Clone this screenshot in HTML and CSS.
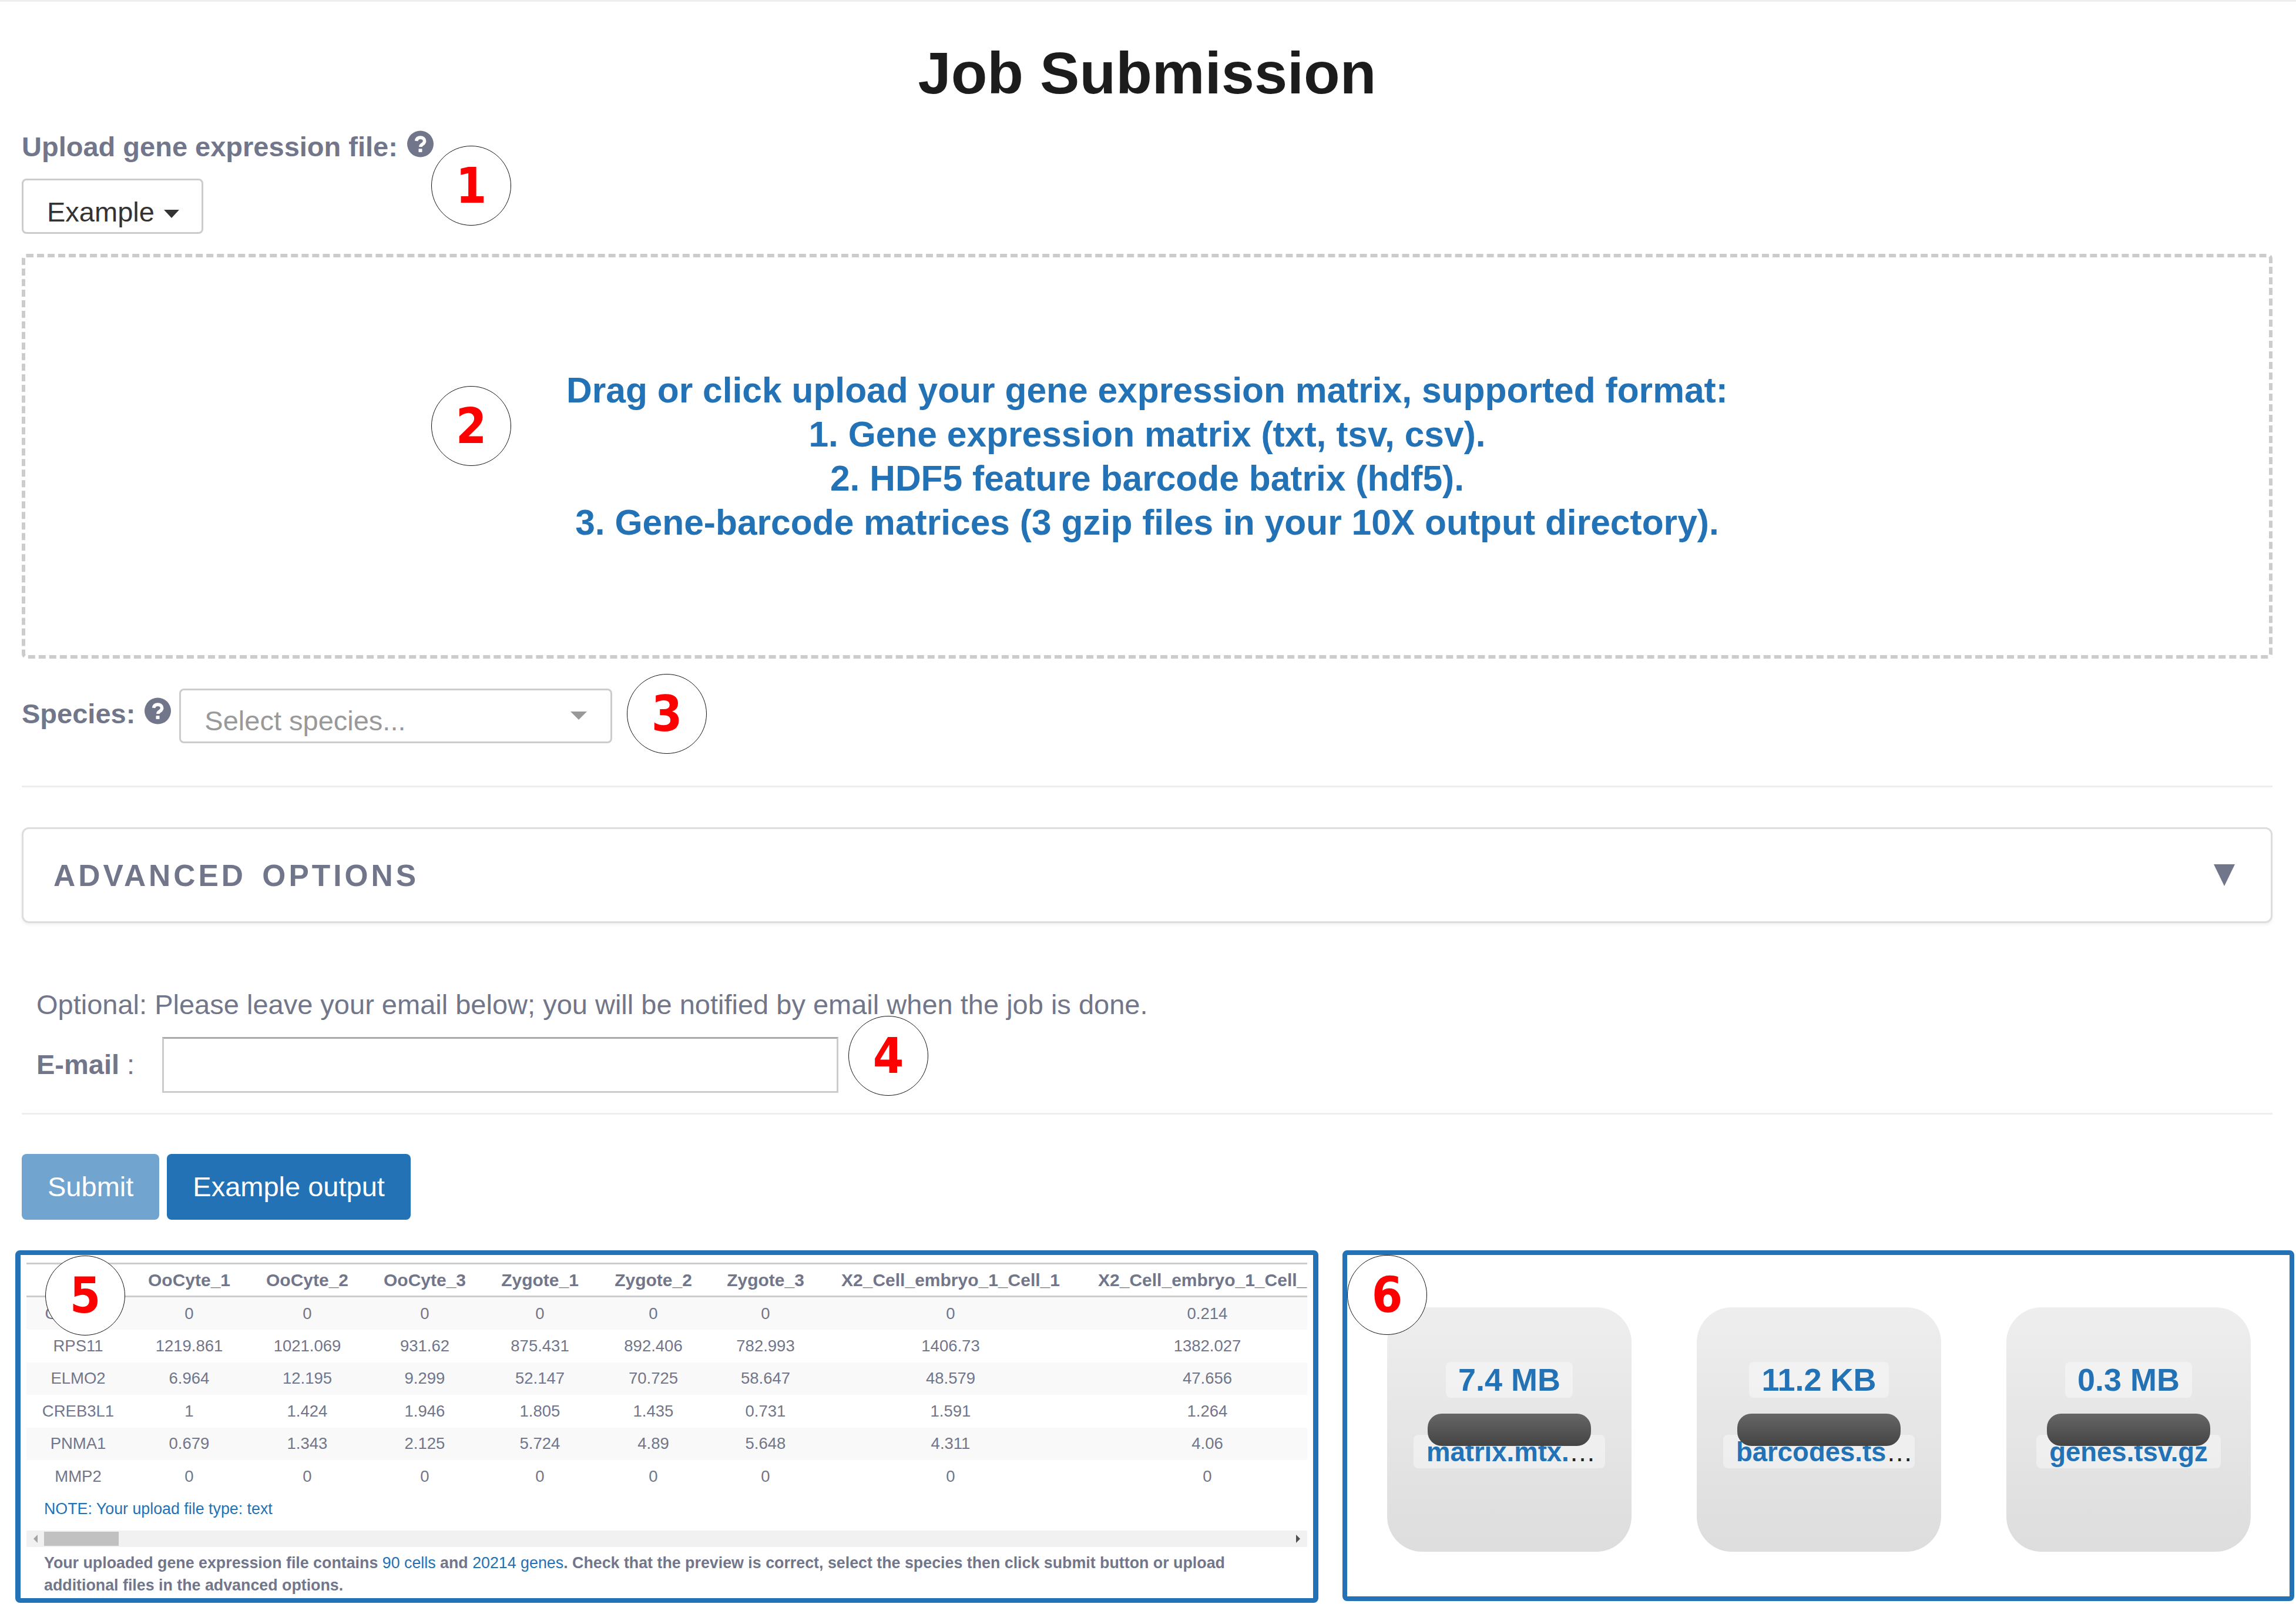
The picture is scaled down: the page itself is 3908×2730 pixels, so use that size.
FILE: index.html
```html
<!DOCTYPE html>
<html>
<head>
	<meta charset="utf-8">
	<title>Job Submission</title>
	<link rel="stylesheet" href="styles.css">
</head>
<body>
	<svg class="defs" width="0" height="0">
		<symbol id="help" viewBox="0 0 24 24">
			<circle cx="12" cy="12" r="12" fill="currentColor"/>
			<path d="M8.300 9.300c.3-2 1.800-3.100 3.800-3.100 2.100 0 3.700 1.300 3.700 3.100 0 1.500-.9 2.300-1.900 3-.9.6-1.700 1.100-1.700 2.300" fill="none" stroke="#fff" stroke-width="3"/>
			<rect x="10.400" y="16.400" width="3.200" height="3" fill="#fff"/>
		</symbol>
	</svg>

	<div class="form">
		<h1 class="title">Job Submission</h1>
		<div class="upload-label">Upload gene expression file: <svg class="help help-upload"><use href="#help"/></svg></div>
		<div class="example-btn">Example<span class="caret"></span></div>

		<div class="dropzone">
			<div class="dz-msg">
				Drag or click upload your gene expression matrix, supported format:<br>
				1. Gene expression matrix (txt, tsv, csv).<br>
				2. HDF5 feature barcode batrix (hdf5).<br>
				3. Gene-barcode matrices (3 gzip files in your 10X output directory).
			</div>
		</div>

		<div class="species-row">
			<div class="species-label">Species:</div>
			<svg class="help help-species"><use href="#help"/></svg>
			<div class="select">
				<span>Select species...</span>
				<span class="select-caret"></span>
			</div>
		</div>
		<div class="rule rule-species"></div>

		<div class="advanced">
			<span class="advanced-title">ADVANCED OPTIONS</span>
			<span class="advanced-arrow"></span>
		</div>

		<div class="email-block">
			<div class="email-note">Optional: Please leave your email below; you will be notified by email when the job is done.</div>
			<div class="email-row">
				<div class="email-label"><b>E-mail</b> :</div>
				<div class="email-input"></div>
			</div>
		</div>
		<div class="rule rule-email"></div>

		<div class="actions">
			<div class="btn btn-disabled">Submit</div>
			<div class="btn">Example output</div>
		</div>
	</div>

	<div class="results">
		<div class="box box-preview">
			<div class="table-wrap">
				<table class="preview">
					<thead>
						<tr><th></th><th>OoCyte_1</th><th>OoCyte_2</th><th>OoCyte_3</th><th>Zygote_1</th><th>Zygote_2</th><th>Zygote_3</th><th>X2_Cell_embryo_1_Cell_1</th><th>X2_Cell_embryo_1_Cell_2</th></tr>
					</thead>
					<tbody>
						<tr><td>C9orf152</td><td>0</td><td>0</td><td>0</td><td>0</td><td>0</td><td>0</td><td>0</td><td>0.214</td></tr>
						<tr><td>RPS11</td><td>1219.861</td><td>1021.069</td><td>931.62</td><td>875.431</td><td>892.406</td><td>782.993</td><td>1406.73</td><td>1382.027</td></tr>
						<tr><td>ELMO2</td><td>6.964</td><td>12.195</td><td>9.299</td><td>52.147</td><td>70.725</td><td>58.647</td><td>48.579</td><td>47.656</td></tr>
						<tr><td>CREB3L1</td><td>1</td><td>1.424</td><td>1.946</td><td>1.805</td><td>1.435</td><td>0.731</td><td>1.591</td><td>1.264</td></tr>
						<tr><td>PNMA1</td><td>0.679</td><td>1.343</td><td>2.125</td><td>5.724</td><td>4.89</td><td>5.648</td><td>4.311</td><td>4.06</td></tr>
						<tr><td>MMP2</td><td>0</td><td>0</td><td>0</td><td>0</td><td>0</td><td>0</td><td>0</td><td>0</td></tr>
					</tbody>
				</table>
				<div class="note">NOTE: Your upload file type: text</div>
				<div class="scrollbar">
					<span class="arrow-left"></span>
					<span class="thumb"></span>
					<span class="arrow-right"></span>
				</div>
			</div>
			<p class="summary">Your uploaded gene expression file contains <span class="count">90 cells</span> and <span class="count">20214 genes</span>. Check that the preview is correct, select the species then click submit button or upload additional files in the advanced options.</p>
		</div>

		<div class="box box-files">
			<div class="tile">
				<div class="size">7.4 MB</div>
				<div class="name">matrix.mtx.<span class="dots">…</span></div>
				<div class="pill"></div>
			</div>
			<div class="tile">
				<div class="size">11.2 KB</div>
				<div class="name">barcodes.ts<span class="dots">…</span></div>
				<div class="pill"></div>
			</div>
			<div class="tile">
				<div class="size">0.3 MB</div>
				<div class="name">genes.tsv.gz</div>
				<div class="pill"></div>
			</div>
		</div>
	</div>

	<div class="badge badge-1">1</div>
	<div class="badge badge-2">2</div>
	<div class="badge badge-3">3</div>
	<div class="badge badge-4">4</div>
	<div class="badge badge-5">5</div>
	<div class="badge badge-6">6</div>
</body>
</html>
```

FILE: styles.css
```css
body{
	margin: 0;
	padding: 0;
	background: #fff;
	color: #71768a;
	font-family: "Liberation Sans", Arial, sans-serif;
	font-size: 47px;
	line-height: 50px;
	overflow: hidden;
}
.defs{
	display: block;
	height: 0;
}
.form{
	padding: 0 40px 0 37px;
	border-top: 3px solid #eee;
}
.title{
	margin: 0;
	padding-top: 66px;
	height: 110px;
	line-height: 110px;
	font-size: 101px;
	font-weight: bold;
	text-align: center;
	color: #1c1c1c;
	box-sizing: content-box;
}
.upload-label{
	margin-top: 43px;
	height: 50px;
	font-weight: bold;
	white-space: nowrap;
}
.help{
	display: inline-block;
	width: 45px;
	height: 46px;
	color: #71768a;
}
.help-upload{
	vertical-align: -2px;
	margin-left: 3px;
}
.example-btn{
	margin-top: 32px;
	width: 309px;
	height: 94px;
	box-sizing: border-box;
	padding: 29px 0 0 40px;
	border: 3px solid #ccc;
	border-radius: 8px;
	color: #333;
	white-space: nowrap;
}
.caret{
	display: inline-block;
	margin-left: 16px;
	vertical-align: 6px;
	border-top: 14px solid #333;
	border-left: 13px solid transparent;
	border-right: 13px solid transparent;
}
.dropzone{
	margin-top: 34px;
	height: 689px;
	box-sizing: border-box;
	border: 6px dashed #ccc;
	border-radius: 8px;
	display: flex;
	align-items: center;
	justify-content: center;
}
.dz-msg{
	font-size: 60.5px;
	line-height: 75px;
	font-weight: bold;
	text-align: center;
	color: #2272b5;
}
.species-row{
	margin-top: 51px;
	display: flex;
	align-items: flex-start;
	height: 93px;
}
.species-label{
	margin-top: 18px;
	font-weight: bold;
}
.help-species{
	margin: 15px 14px 0 16px;
}
.select{
	width: 737px;
	height: 93px;
	box-sizing: border-box;
	padding: 27px 40px 0 40px;
	border: 3px solid #ccc;
	border-radius: 8px;
	display: flex;
	justify-content: space-between;
	align-items: flex-start;
	color: #999;
}
.select-caret{
	margin-top: 9px;
	border-top: 14px solid #999;
	border-left: 14px solid transparent;
	border-right: 14px solid transparent;
}
.rule{
	height: 3px;
	background: #eee;
}
.rule-species{
	margin-top: 72px;
}
.advanced{
	margin-top: 68px;
	height: 163px;
	box-sizing: border-box;
	padding: 0 61px 0 51px;
	border: 3px solid #ddd;
	border-radius: 12px;
	box-shadow: 0 3px 5px rgba(0,0,0,.06);
	display: flex;
	align-items: center;
	justify-content: space-between;
}
.advanced-title{
	font-size: 51.5px;
	font-weight: bold;
	letter-spacing: 5px;
	word-spacing: 8px;
}
.advanced-arrow{
	border-top: 37px solid #71768a;
	border-left: 18px solid transparent;
	border-right: 18px solid transparent;
}
.email-block{
	margin-top: 109px;
	padding-left: 25px;
}
.email-note{
	line-height: 60px;
}
.email-row{
	margin-top: 25px;
	display: flex;
	align-items: flex-start;
}
.email-label{
	width: 214px;
	margin-top: 22px;
}
.email-input{
	width: 1151px;
	height: 95px;
	box-sizing: border-box;
	border: 3px solid #ccc;
	border-top-color: #aaa;
}
.rule-email{
	margin-top: 34px;
}
.actions{
	margin-top: 67px;
	display: flex;
	gap: 13px;
}
.btn{
	height: 112px;
	line-height: 112px;
	padding: 0 44px;
	border-radius: 8px;
	background: #2272b5;
	color: #fff;
}
.btn-disabled{
	background: #72a4d0;
}
.results{
	margin-top: 52px;
	padding: 0 3px 0 26px;
	display: flex;
	align-items: flex-start;
	gap: 41px;
}
.box{
	height: 600px;
	box-sizing: border-box;
	border: 8px solid #2272b5;
	border-radius: 8px;
}
.box-preview{
	width: 2218px;
	padding: 13px 10px 0;
	border-left-width: 9px;
	border-right-width: 9px;
}
.table-wrap{
	overflow: hidden;
}
.preview{
	table-layout: fixed;
	width: 2226px;
	border-collapse: collapse;
	font-size: 27.5px;
	line-height: 30px;
	text-align: center;
}
.preview th{
	height: 53px;
	padding: 0;
	font-size: 30px;
	white-space: nowrap;
	border-top: 3px solid #ccc;
	border-bottom: 3px solid #ccc;
}
.preview td{
	height: 55.4px;
	padding: 0;
}
.preview tbody tr:nth-child(odd){
	background: #f9f9f9;
}
.preview th:nth-child(1){width: 176px;}
.preview th:nth-child(2){width: 202px;}
.preview th:nth-child(3){width: 200px;}
.preview th:nth-child(4){width: 200px;}
.preview th:nth-child(5){width: 192px;}
.preview th:nth-child(6){width: 194px;}
.preview th:nth-child(7){width: 188px;}
.preview th:nth-child(8){width: 442px;}
.preview th:nth-child(9){width: 432px;}
.note{
	margin-top: 9px;
	padding-left: 30px;
	font-size: 26.8px;
	line-height: 38px;
	color: #2272b5;
}
.scrollbar{
	margin-top: 18px;
	height: 28px;
	background: #f1f1f1;
	display: flex;
	align-items: center;
	padding: 0 12px;
}
.arrow-left{
	border-right: 7px solid #a3a3a3;
	border-top: 7px solid transparent;
	border-bottom: 7px solid transparent;
}
.thumb{
	margin-left: 11px;
	width: 127px;
	height: 24px;
	background: #c1c1c1;
}
.arrow-right{
	margin-left: auto;
	border-left: 7px solid #505050;
	border-top: 7px solid transparent;
	border-bottom: 7px solid transparent;
}
.summary{
	margin: 8px 0 0;
	padding: 0 60px 0 30px;
	font-size: 26.8px;
	line-height: 38px;
	font-weight: bold;
}
.count{
	font-weight: normal;
	color: #2272b5;
}
.box-files{
	width: 1620px;
	height: 597px;
	padding: 89px 0 0 68px;
	display: flex;
	align-items: flex-start;
	gap: 111px;
}
.tile{
	position: relative;
	width: 416px;
	height: 416px;
	box-sizing: border-box;
	padding-top: 93px;
	border-radius: 60px;
	background: linear-gradient(to bottom, #eee, #ddd);
	display: flex;
	flex-direction: column;
	align-items: center;
	font-weight: bold;
	color: #2272b5;
}
.size{
	height: 61px;
	line-height: 61px;
	padding: 0 21px;
	font-size: 54px;
	border-radius: 8px;
	background: rgba(255,255,255,.4);
}
.name{
	margin-top: 63px;
	max-width: 326px;
	height: 57px;
	line-height: 60px;
	box-sizing: border-box;
	padding: 0 22px;
	font-size: 45.5px;
	white-space: nowrap;
	overflow: hidden;
	border-radius: 8px;
	background: rgba(255,255,255,.4);
}
.dots{
	color: #222;
	font-weight: normal;
}
.pill{
	position: absolute;
	top: 181px;
	left: 69px;
	width: 278px;
	height: 55px;
	border-radius: 24px;
	background: linear-gradient(to bottom, #666, #444);
}
.badge{
	position: absolute;
	width: 136px;
	height: 136px;
	box-sizing: border-box;
	border: 1.5px solid #111;
	border-radius: 50%;
	background: #fff;
	display: flex;
	align-items: center;
	justify-content: center;
	color: #f00;
	font-family: "DejaVu Sans", sans-serif;
	font-stretch: condensed;
	font-size: 84px;
	font-weight: bold;
}
.badge-1{left: 734px; top: 248px;}
.badge-2{left: 734px; top: 657px;}
.badge-3{left: 1067px; top: 1147px;}
.badge-4{left: 1444px; top: 1729px;}
.badge-5{left: 77px; top: 2137px;}
.badge-6{left: 2293px; top: 2136px;}
```
